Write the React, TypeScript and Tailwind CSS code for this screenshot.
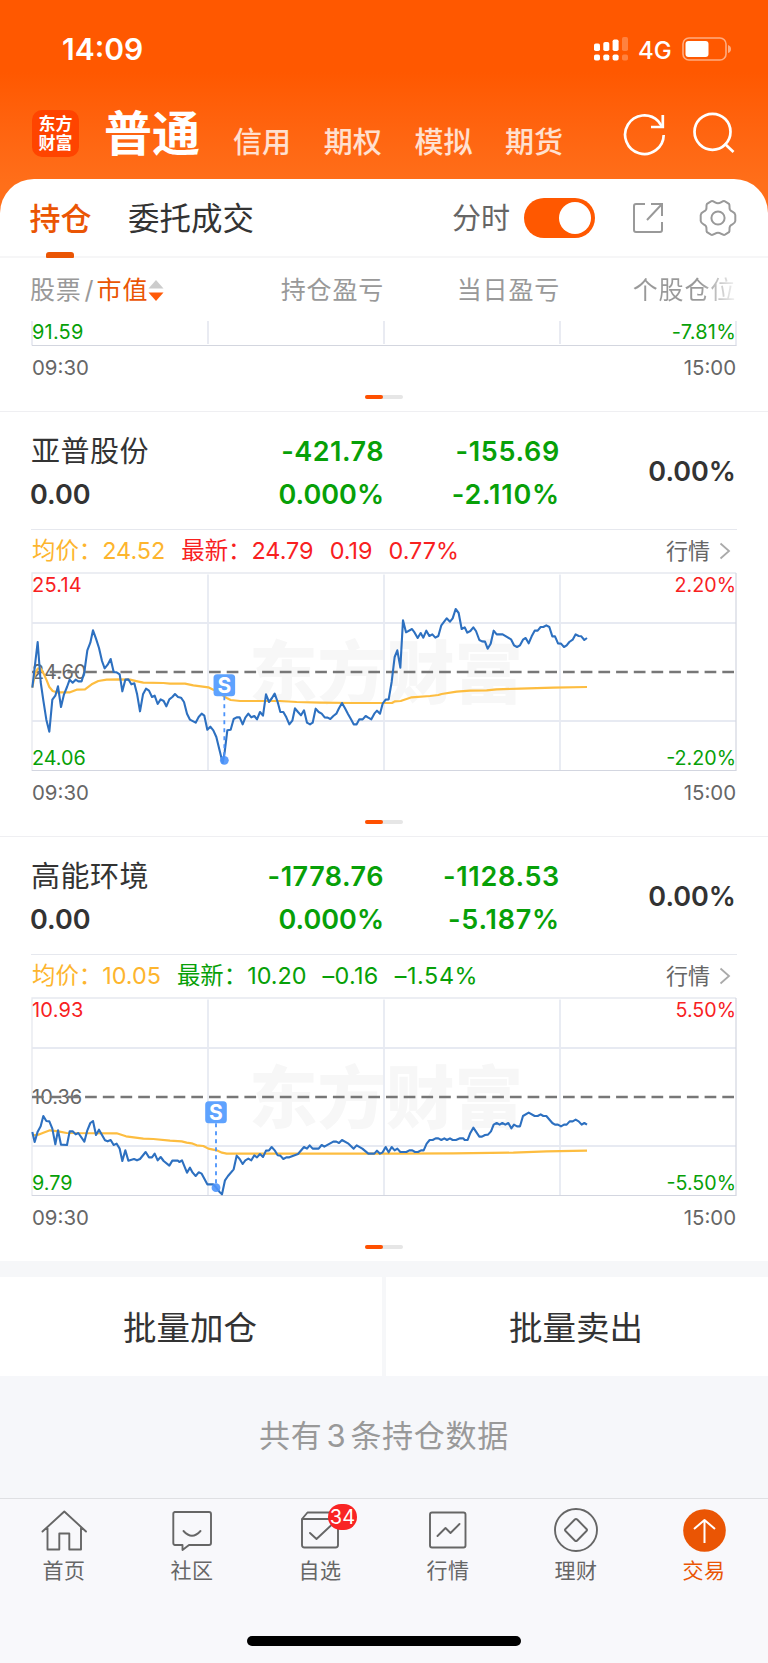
import type { ReactNode } from "react";

type Marker = { x: number; top: number; dot: number };

type Stock = {
  name: string;
  amount: string;
  profit: string;
  profitRate: string;
  dayProfit: string;
  dayRate: string;
  share: string;
  avg: string;
  last: string;
  change: string;
  changeRate: string;
  up: boolean;
  high: string;
  mid: string;
  low: string;
  range: string;
  price: string;
  average: string;
  marker: Marker;
};

const stocks: Stock[] = [
  {
    name: "亚普股份",
    amount: "0.00",
    profit: "-421.78",
    profitRate: "0.000%",
    dayProfit: "-155.69",
    dayRate: "-2.110%",
    share: "0.00%",
    avg: "24.52",
    last: "24.79",
    change: "0.19",
    changeRate: "0.77%",
    up: true,
    high: "25.14",
    mid: "24.60",
    low: "24.06",
    range: "2.20%",
    price:
      "1,344 17,207 26,327 34,382 43,440 52,476 61,380 70,368 78,340 87,402 96,364 105,342 113,320 122,329 131,320 139,325 149,325 157,297 166,232 175,209 183,172 192,197 201,225 210,264 218,286 227,275 236,258 245,297 254,298 263,304 271,355 280,320 289,319 298,334 307,331 315,362 324,415 333,364 342,347 351,353 360,372 368,368 377,393 386,379 395,384 403,400 412,379 421,372 429,363 438,372 447,374 456,387 465,422 474,440 491,449 500,432 509,422 517,428 526,470 535,461 544,472 553,492 564,537 572,570 578,537 586,472 596,470 605,438 614,433 623,433 632,454 640,434 649,422 658,433 667,429 675,439 684,417 693,428 702,364 711,387 720,375 728,362 737,387 745,417 754,417 763,433 772,454 781,443 789,406 798,417 807,427 816,412 825,449 834,454 842,449 851,407 860,417 869,422 878,433 887,434 895,438 904,429 913,422 921,406 930,390 939,406 948,423 957,439 965,454 974,454 982,439 992,439 1001,429 1009,434 1018,439 1027,422 1035,413 1044,422 1052,392 1061,380 1070,379 1079,327 1088,252 1096,232 1105,284 1113,142 1122,178 1140,168 1148,179 1157,195 1166,180 1174,194 1183,173 1192,189 1201,184 1210,194 1219,189 1228,157 1244,136 1254,146 1262,136 1271,108 1280,120 1289,168 1298,163 1306,179 1315,174 1324,163 1332,174 1342,201 1350,205 1359,206 1367,227 1376,212 1385,173 1394,184 1412,184 1437,199 1446,217 1455,222 1464,217 1473,200 1481,195 1490,211 1499,190 1508,173 1517,173 1526,162 1534,162 1543,157 1552,162 1561,190 1569,190 1578,211 1587,212 1596,222 1604,217 1612,207 1622,200 1631,184 1640,189 1648,190 1657,201 1665,195",
    average:
      "1,344 9,302 17,287 26,287 35,302 44,322 52,342 62,354 74,358 114,358 134,350 159,349 179,334 199,324 224,320 264,319 294,320 316,325 334,329 394,330 414,332 459,332 484,337 529,343 544,350 564,362 584,375 596,381 624,384 744,384 794,387 864,389 964,390 1080,390 1088,385 1106,384 1139,373 1194,369 1219,366 1229,363 1274,356 1314,353 1364,352 1394,349 1464,347 1564,344 1665,342",
    marker: { x: 577, top: 304, dot: 562 },
  },
  {
    name: "高能环境",
    amount: "0.00",
    profit: "-1778.76",
    profitRate: "0.000%",
    dayProfit: "-1128.53",
    dayRate: "-5.187%",
    share: "0.00%",
    avg: "10.05",
    last: "10.20",
    change: "–0.16",
    changeRate: "–1.54%",
    up: false,
    high: "10.93",
    mid: "10.36",
    low: "9.79",
    range: "5.50%",
    price:
      "1,402 8,432 17,401 26,385 34,354 43,369 52,370 61,392 70,439 78,397 87,440 105,441 113,400 122,400 131,409 139,405 157,431 166,397 175,375 183,369 192,411 201,395 219,427 227,430 236,426 245,441 254,437 263,452 271,489 280,457 289,488 306,483 315,487 324,483 341,462 351,478 360,478 368,467 377,487 386,477 395,489 412,503 421,488 438,488 442,492 450,487 465,524 474,509 482,524 491,534 500,523 509,527 526,559 544,559 552,568 562,581 570,589 579,547 588,534 605,514 614,473 623,483 632,498 640,487 649,482 658,487 667,472 675,478 684,468 693,477 702,458 711,457 719,447 728,457 737,472 745,473 754,483 763,478 772,478 798,468 816,447 825,452 833,442 842,452 860,452 869,441 877,446 904,431 913,431 921,435 930,426 948,436 965,452 974,442 991,452 1009,467 1027,467 1035,458 1044,467 1052,463 1061,447 1070,463 1079,447 1088,457 1096,452 1105,462 1123,462 1132,457 1141,457 1149,462 1158,462 1167,457 1175,457 1184,437 1193,426 1202,426 1211,421 1219,421 1228,426 1237,421 1245,426 1254,421 1262,426 1272,426 1284,421 1294,421 1298,426 1307,426 1315,405 1324,389 1342,416 1350,416 1359,411 1368,410 1377,400 1385,380 1394,375 1403,380 1411,375 1420,380 1429,375 1438,391 1446,380 1455,385 1464,385 1473,354 1490,344 1508,354 1517,354 1526,349 1534,354 1543,354 1561,375 1569,380 1578,380 1587,385 1596,380 1604,380 1613,370 1622,370 1631,365 1640,370 1649,380 1657,375 1665,380",
    average:
      "1,412 19,410 34,404 54,397 79,400 104,405 254,406 282,415 334,422 364,423 414,428 449,430 464,434 479,436 494,442 514,444 529,452 554,457 570,464 584,467 764,467 1080,467 1264,466 1444,464 1544,460 1665,458",
    marker: { x: 552, top: 310, dot: 569 },
  },
];

const GREEN = "text-[#07a008]";
const RED = "text-[#f8211f]";

function StatusBar() {
  return (
    <div className="flex h-[98px] items-center justify-between pl-[62px] pr-[36px] text-white">
      <span className="text-[30px] font-semibold leading-none">14:09</span>
      <div className="flex items-center">
        <svg width="34" height="24" viewBox="0 0 34 24" fill="#fff">
          <rect x="0" y="6.500" width="6" height="7.500" rx="1.800" />
          <rect x="9.300" y="5" width="6" height="9" rx="1.800" />
          <rect x="18.600" y="2.500" width="6" height="11.500" rx="1.800" />
          <rect x="28" y="0" width="6" height="14" rx="1.800" opacity=".25" />
          <rect x="0" y="17.500" width="6" height="6" rx="1.800" />
          <rect x="9.300" y="17.500" width="6" height="6" rx="1.800" />
          <rect x="18.600" y="17.500" width="6" height="6" rx="1.800" />
          <rect x="28" y="17.500" width="6" height="6" rx="1.800" opacity=".25" />
        </svg>
        <span className="ml-[10px] w-[34px] pt-[3px] text-[24px] font-medium leading-none">4G</span>
        <svg className="ml-[10px]" width="50" height="24" viewBox="0 0 50 24">
          <rect x="1" y="1" width="43" height="22" rx="6" fill="none" stroke="#fff" strokeOpacity=".5" strokeWidth="1.600" />
          <rect x="3.500" y="4" width="23" height="16" rx="3" fill="#fff" />
          <path d="M46 8v8q3-1 3-4t-3-4" fill="#fff" opacity=".5" />
        </svg>
      </div>
    </div>
  );
}

function NavBar() {
  return (
    <div className="flex h-[81px] items-start pl-[32px] text-white">
      <div className="mt-[12px] flex h-[47px] w-[47px] flex-col items-center justify-center rounded-[10px] bg-[#ff4400] text-[17px] font-bold leading-[19px]">
        <span>东方</span>
        <span>财富</span>
      </div>
      <span className="ml-[25px] mt-[11px] w-[96px] text-[48px] font-bold leading-[49px]">普通</span>
      <div className="ml-[33px] mt-[27px] flex w-[362px] text-[29px] font-medium leading-[36px] text-white/80">
        {["信用", "期权", "模拟", "期货"].map((t) => (
          <span key={t} className="w-[90.700px] shrink-0">{t}</span>
        ))}
      </div>
      <svg className="ml-[28px] mt-[14px]" width="44" height="44" viewBox="0 0 44 44" fill="none" stroke="#fff" strokeWidth="2.700">
        <path d="M40.700 23A19.300 19.300 0 1 1 35.300 9.300L39 14.500" />
        <path d="M39.800 3v12H28" />
      </svg>
      <svg className="ml-[25px] mt-[14px]" width="44" height="44" viewBox="0 0 44 44" fill="none" stroke="#fff" strokeWidth="2.700">
        <circle cx="20.500" cy="19.800" r="18" />
        <path d="M32.500 31.500l9 8.500" />
      </svg>
    </div>
  );
}

function TabRow() {
  return (
    <div className="flex h-[79px] items-center rounded-t-[34px] border-b-2 border-[#f6f6f7] bg-white pl-[28px] pt-[1px]">
      <div className="flex h-full w-[64px] flex-col items-center pt-[17px]">
        <span className="pl-[1px] text-[31px] font-medium leading-[44px] text-[#ea5504]">持仓</span>
        <span className="mt-[11px] h-[6px] w-[28px] shrink-0 rounded-t-[3px] rounded-b-[1px] bg-[#ea5504]" />
      </div>
      <span className="ml-[36px] w-[130px] pt-[1px] text-[31.500px] text-[#333]">委托成交</span>
      <span className="ml-[194px] w-[60px] pt-[2px] text-[29px] text-[#666]">分时</span>
      <div className="ml-[12px] flex h-[40px] w-[71px] items-center justify-end rounded-full bg-[#ff5800] pr-[4px]">
        <span className="h-[32px] w-[32px] rounded-full bg-white" />
      </div>
      <svg className="ml-[37px]" width="32" height="32" viewBox="0 0 32 32" fill="none" stroke="#999" strokeWidth="2">
        <path d="M13 2H4Q2 2 2 4V28Q2 30 4 30H28Q30 30 30 28V20M19 2H30V14M30 2L15 18" />
      </svg>
      <svg className="ml-[35px]" width="38" height="38" viewBox="0 0 38 38" fill="none" stroke="#999" strokeWidth="2">
        <path
          d="M19 4.200C22 4.200 23.500 1.200 26 2.300L30 4.800C31.200 6.500 29.800 8.500 31 10.800C32.300 13 36 12.700 36.300 16V22C36 25.300 32.300 25 31 27.200C29.800 29.500 31.200 31.500 30 33.200L26 35.700C23.500 36.800 22 33.800 19 33.800C16 33.800 14.500 36.800 12 35.700L8 33.200C6.800 31.500 8.200 29.500 7 27.200C5.700 25 2 25.300 1.700 22V16C2 12.700 5.700 13 7 10.800C8.200 8.500 6.800 6.500 8 4.800L12 2.300C14.500 1.200 16 4.200 19 4.200Z"
          strokeLinejoin="round"
        />
        <circle cx="19" cy="19" r="6.600" />
      </svg>
    </div>
  );
}

function TableHead() {
  return (
    <div className="flex h-[63px] items-center pl-[30px] pt-[2px] text-[25px] tracking-[.8px] text-[#999]">
      <div className="flex w-[200px] items-center">
        <span>股票</span>
        <span className="ml-[3px] w-[12px]">/</span>
        <span className="text-[#ea5504]">市值</span>
        <svg width="16" height="22" viewBox="0 0 16 22">
          <path d="M8 0l7.500 8.500H.5z" fill="#ccc" />
          <path d="M8 21l7.500-8.500H.5z" fill="#ff5a08" />
        </svg>
      </div>
      <span className="w-[154px] text-right">持仓盈亏</span>
      <span className="w-[176px] text-right">当日盈亏</span>
      <span className="w-[176px] bg-linear-to-r from-[#999] from-80% to-[#f4f4f4] bg-clip-text text-right text-transparent">个股仓位</span>
    </div>
  );
}

function TimeAxis() {
  return (
    <div className="flex h-[42px] items-center justify-between px-[32px] pt-[1px] text-[20.400px] leading-none text-[#666]">
      <span>09:30</span>
      <span>15:00</span>
    </div>
  );
}

function PagerDots() {
  return (
    <div className="flex h-[22px] justify-center pt-[6px]">
      <div className="h-[4px] w-[38px] rounded-full bg-[#e6e6e6]">
        <div className="h-[4px] w-[18px] rounded-full bg-[#ff5000]" />
      </div>
    </div>
  );
}

function PartialChart() {
  return (
    <div>
      <svg className="ml-[31px] block" width="706" height="26" viewBox="-1 0 706 26">
        <path d="M0 0V24.500M704 0V24.500M176 0V23M352 0V23M528 0V23" stroke="#e4e7ef" strokeWidth="1.600" />
        <path d="M0 24.500H704.500" stroke="#d3d6df" strokeWidth="1.200" />
        <text x="0" y="18" fontSize="20" letterSpacing=".2" fill="#07a008">91.59</text>
        <text x="704" y="18" fontSize="20" letterSpacing=".2" fill="#07a008" textAnchor="end">-7.81%</text>
      </svg>
      <TimeAxis />
      <PagerDots />
    </div>
  );
}

function Chart({ s }: { s: Stock }) {
  const mx = s.marker.x / 3;
  const mt = s.marker.top / 3;
  const md = s.marker.dot / 3;
  return (
    <svg className="ml-[31px] block" width="706" height="200" viewBox="-1 -1 706 200">
      <text x="217" y="125" fontSize="68.500" fontWeight="900" fill="#f7f7f7">东方财富</text>
      <path d="M0 50H704M0 148H704M176 1.500V197M352 1.500V197M528 1.500V197" stroke="#e7eaf2" strokeWidth="1.800" />
      <path d="M0 198V0H704" fill="none" stroke="#e6e9ef" strokeWidth="1.300" />
      <path d="M0 197.500H704V0" fill="none" stroke="#d3d6e0" strokeWidth="1.200" />
      <text x="0" y="106" fontSize="20" fill="#666">{s.mid}</text>
      <path d="M0 99H703" stroke="#777" strokeWidth="2.300" strokeDasharray="11.700 6" />
      <g transform="scale(.33333)" fill="none" strokeLinejoin="round">
        <polyline points={s.average} stroke="#fdbd40" strokeWidth="6.500" />
        <polyline points={s.price} stroke="#2d70c0" strokeWidth="6.300" />
      </g>
      <path d={`M${mx} ${mt + 22}V${md}`} stroke="#4b93fb" strokeWidth="1.800" strokeDasharray="4 4" />
      <circle cx={mx} cy={md} r="4.400" fill="#4b93fb" fillOpacity=".9" />
      <rect x={mx - 10.800} y={mt} width="21.600" height="22" rx="3.500" fill="#5ea2fe" />
      <text x={mx} y={mt + 18.500} fontSize="21" fontWeight="700" fill="#fff" textAnchor="middle">S</text>
      <text x="0" y="19" fontSize="20" letterSpacing=".2" fill="#f8211f">{s.high}</text>
      <text x="0" y="191.500" fontSize="19.800" fill="#07a008">{s.low}</text>
      <text x="704" y="19" fontSize="19.700" fill="#f8211f" textAnchor="end">{s.range}</text>
      <text x="704" y="191.500" fontSize="19.700" fill="#07a008" textAnchor="end">-{s.range}</text>
    </svg>
  );
}

function StockBlock({ s }: { s: Stock }) {
  const tone = s.up ? RED : GREEN;
  return (
    <section className="h-[425px] border-t border-[#efeff2]">
      <div className="mx-[31px] flex h-[118px] border-b border-[#e6e8ee] pt-[18px] text-[27px] font-semibold leading-[43px]">
        <div className="w-[199px] text-[#333]">
          <div className="text-[29px] font-normal tracking-[.5px]">{s.name}</div>
          <div className="-ml-px">{s.amount}</div>
        </div>
        <div className={`w-[154px] text-right ${GREEN}`}>
          <div className="tracking-[.5px]">{s.profit}</div>
          <div>{s.profitRate}</div>
        </div>
        <div className={`w-[176px] text-right ${GREEN}`}>
          <div className="tracking-[.7px]">{s.dayProfit}</div>
          <div className="tracking-[.8px]">{s.dayRate}</div>
        </div>
        <div className="w-[176px] pt-[20px] text-right text-[#333]">{s.share}</div>
      </div>
      <div className="flex h-[42px] items-center pl-[32px] pr-[37px] text-[23.400px]">
        <span className="text-[#fdb52e]">均价：{s.avg}</span>
        <span className={`ml-[16px] ${tone}`}>最新：{s.last}</span>
        <span className={`ml-[16px] ${s.up ? "" : "tracking-[.3px]"} ${tone}`}>{s.change}</span>
        <span className={`ml-[16px] ${s.up ? "" : "tracking-[.6px]"} ${tone}`}>{s.changeRate}</span>
        <span className="ml-auto text-[22px] text-[#666]">行情</span>
        <svg className="ml-[9px]" width="12" height="18" viewBox="0 0 12 18" fill="none" stroke="#aaa" strokeWidth="1.800">
          <path d="M1.500 1.500L10 9l-8.500 7.500" />
        </svg>
      </div>
      <Chart s={s} />
      <TimeAxis />
      <PagerDots />
    </section>
  );
}

function TabItem({ label, active, children }: { label: string; active?: boolean; children: ReactNode }) {
  return (
    <div className="relative flex w-[128px] flex-col items-center pt-[8px]">
      <svg width="46" height="46" viewBox="0 0 46 46" fill="none" stroke="#666" strokeWidth="1.900" strokeLinejoin="round" strokeLinecap="round">
        {children}
      </svg>
      <span className={`mt-[2px] text-[21px] leading-[32px] tracking-[.5px] ${active ? "text-[#ea5504]" : "text-[#666]"}`}>{label}</span>
    </div>
  );
}

function TabBar() {
  return (
    <nav className="flex h-[165px] flex-col items-center justify-between border-t border-[#dfe0e3] bg-[#f8f8fb] pb-[17px]">
      <div className="flex">
        <TabItem label="首页">
          <path d="M1.500 24.500L23.300 4.500L45 24.500M6.500 21V42.500H18.300V26.500H28.300V42.500H40V21" />
        </TabItem>
        <TabItem label="社区">
          <path d="M5.500 5H40Q42 5 42 7V36Q42 38 40 38H20L13.500 43V38H6Q4.300 38 4.300 36V7Q4.300 5 6 5Z" />
          <path d="M14.500 24Q23 33.500 31.500 24" />
        </TabItem>
        <TabItem label="自选">
          <path d="M5 12V38Q5 40.500 7.500 40.500H38.500Q41 40.500 41 38V12M5 12H41M5 12L10.500 5.500H41V12M13 26L19.500 32L35 17.500" />
        </TabItem>
        <TabItem label="行情">
          <rect x="5" y="5.500" width="35.500" height="35" rx="2" />
          <path d="M12.500 29L20.500 21L25.500 26L34.500 17" />
        </TabItem>
        <TabItem label="理财">
          <circle cx="23" cy="23" r="21" />
          <path d="M21.800 12.500Q23 11.300 24.200 12.500L33.500 22Q34.500 23 33.500 24L24.200 33.500Q23 34.700 21.800 33.500L12.500 24Q11.500 23 12.500 22Z" />
        </TabItem>
        <TabItem label="交易" active>
          <circle cx="23.500" cy="23.500" r="21.300" fill="#ea5504" stroke="none" />
          <path d="M23.500 36V13M13 22L23.500 13L34 22" stroke="#fff" strokeWidth="2" strokeLinecap="butt" />
        </TabItem>
      </div>
      <div className="h-[10px] w-[274px] rounded-full bg-black" />
    </nav>
  );
}

export default function App() {
  return (
    <div className="flex h-[1663px] w-[768px] flex-col overflow-hidden bg-white font-['Inter','Noto_Sans_CJK_SC',sans-serif]">
      <header className="bg-linear-to-b from-[#ff5800] from-[28%] to-[#ff6f1a] to-[72%]">
        <StatusBar />
        <NavBar />
        <TabRow />
      </header>
      <TableHead />
      <PartialChart />
      {stocks.map((s) => (
        <StockBlock key={s.name} s={s} />
      ))}
      <div className="flex h-[115px] gap-[4px] bg-[#f6f7f9] pt-[16px] text-[33.500px] text-[#333]">
        <button className="flex-1 bg-white pr-[2px] pt-[3px]">批量加仓</button>
        <button className="flex-1 bg-white pr-[2px] pt-[3px]">批量卖出</button>
      </div>
      <div className="flex h-[122px] items-center justify-center bg-[#f6f7fa] pb-[2px] text-[31px] tracking-[.7px] text-[#999]">
        共有<span className="mx-[4px]">3</span>条持仓数据
      </div>
      <div className="relative">
        <TabBar />
        <span className="absolute left-[328px] top-[6px] flex h-[26px] w-[29px] items-center justify-center rounded-full bg-[#f92424] text-[20px] leading-none text-white">34</span>
      </div>
    </div>
  );
}
